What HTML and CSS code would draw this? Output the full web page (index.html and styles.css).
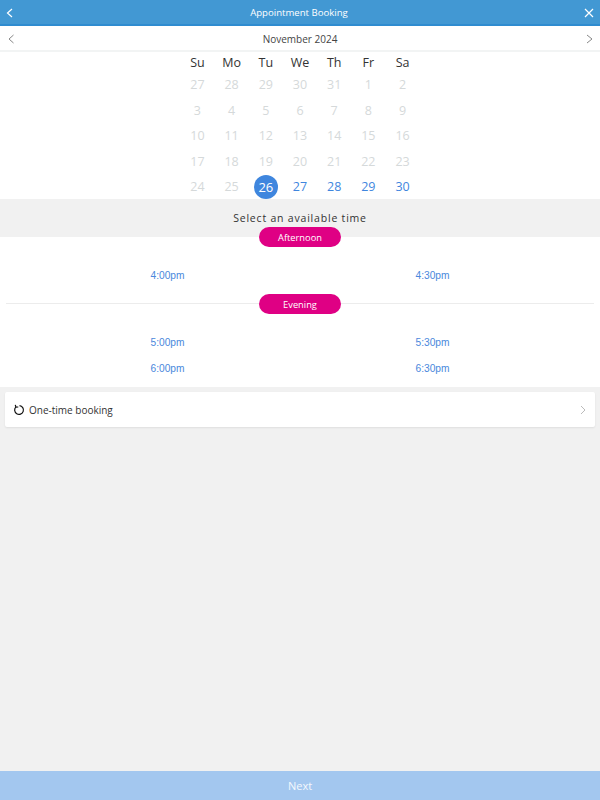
FILE: index.html
```html
<!DOCTYPE html>
<html lang="en">
<head>
  <meta charset="UTF-8">
  <title>Appointment Booking</title>
  <link rel="stylesheet" href="styles.css">
</head>
<body>
  <div class="page">
    <div class="header">
      <svg class="icon" width="12" height="12" viewBox="0 0 12 12"><path d="M9 2 L4.5 6 L9 10" /></svg>
      <span class="header-title">Appointment Booking</span>
      <svg class="icon" width="12" height="12" viewBox="0 0 12 12"><path d="M2 2 L10 10 M10 2 L2 10" /></svg>
    </div>

    <div class="month-bar">
      <svg class="month-arrow" width="12" height="12" viewBox="0 0 12 12"><path d="M8.5 2 L4 6 L8.5 10" /></svg>
      <span class="month-name">November 2024</span>
      <svg class="month-arrow" width="12" height="12" viewBox="0 0 12 12"><path d="M4 2 L9 6 L4 10" /></svg>
    </div>

    <div class="calendar">
      <div class="week week-head">
        <span>Su</span><span>Mo</span><span>Tu</span><span>We</span><span>Th</span><span>Fr</span><span>Sa</span>
      </div>
      <div class="week">
        <span class="off">27</span><span class="off">28</span><span class="off">29</span><span class="off">30</span><span class="off">31</span><span class="off">1</span><span class="off">2</span>
      </div>
      <div class="week">
        <span class="off">3</span><span class="off">4</span><span class="off">5</span><span class="off">6</span><span class="off">7</span><span class="off">8</span><span class="off">9</span>
      </div>
      <div class="week">
        <span class="off">10</span><span class="off">11</span><span class="off">12</span><span class="off">13</span><span class="off">14</span><span class="off">15</span><span class="off">16</span>
      </div>
      <div class="week">
        <span class="off">17</span><span class="off">18</span><span class="off">19</span><span class="off">20</span><span class="off">21</span><span class="off">22</span><span class="off">23</span>
      </div>
      <div class="week">
        <span class="off">24</span><span class="off">25</span><span class="today"><b>26</b></span><span class="open">27</span><span class="open">28</span><span class="open">29</span><span class="open">30</span>
      </div>
    </div>

    <div class="time-heading">Select an available time</div>

    <div class="times">
      <div class="period period-first"><span class="pill">Afternoon</span></div>
      <div class="time-row"><a href="#">4:00pm</a><a href="#">4:30pm</a></div>
      <div class="period period-line"><span class="pill">Evening</span></div>
      <div class="time-row time-row-evening"><a href="#">5:00pm</a><a href="#">5:30pm</a></div>
      <div class="time-row"><a href="#">6:00pm</a><a href="#">6:30pm</a></div>
    </div>

    <div class="booking-card">
      <svg class="repeat-icon" width="12" height="12" viewBox="0 0 12 12"><path d="M6.5 1.6 A4.4 4.4 0 1 1 2.9 2.9" /><path d="M2.3 0.8 L2.9 3.2 L5.3 3" /></svg>
      <span class="booking-label">One-time booking</span>
      <svg class="card-arrow" width="10" height="10" viewBox="0 0 10 10"><path d="M3 1 L7 5 L3 9" /></svg>
    </div>

    <div class="next-bar">Next</div>
  </div>
</body>
</html>
```

FILE: styles.css
```css
body {
  margin: 0;
  background: #f1f1f1;
  font-family: "Open Sans", Arial, sans-serif;
}
svg path {
  fill: none;
}
.page {
  height: 800px;
  display: flex;
  flex-direction: column;
}
.header {
  height: 23px;
  padding: 1px 5px 0 3px;
  display: flex;
  align-items: center;
  justify-content: space-between;
  background: #4298d3;
  border-bottom: 2px solid #2f8cd0;
}
.header-title {
  color: #fff;
  font-size: 9.6px;
}
.icon path {
  stroke: #fff;
  stroke-width: 1.2;
}
.month-bar {
  height: 22px;
  padding: 2px 5px 0;
  display: flex;
  align-items: center;
  justify-content: space-between;
  background: #fff;
  border-bottom: 2px solid #f2f4f4;
}
.month-name {
  color: #444;
  font-size: 10px;
}
.month-arrow path {
  stroke: #888;
  stroke-width: 1;
}
.calendar {
  background: #fff;
  height: 146px;
  padding-top: 1px;
}
.week {
  height: 25.5px;
  display: flex;
  justify-content: center;
  align-items: center;
  font-size: 12.5px;
}
.week span {
  width: 34.2px;
  text-align: center;
}
.week-head {
  height: 19px;
  color: #333;
}
.off {
  color: #d5d9da;
}
.open {
  color: #3f86de;
}
.today b {
  display: block;
  width: 24px;
  height: 24px;
  margin: 0 auto;
  border-radius: 50%;
  background: #3f86de;
  color: #fff;
  font-weight: 400;
  font-size: 13px;
  line-height: 24px;
}
.time-heading {
  height: 38px;
  line-height: 38px;
  text-align: center;
  color: #333;
  font-size: 10.5px;
  letter-spacing: 0.8px;
}
.times {
  background: #fff;
  height: 150px;
  padding: 0 6px;
}
.pill {
  display: block;
  width: 82px;
  height: 20px;
  line-height: 21px;
  text-align: center;
  border-radius: 10px;
  background: #df0084;
  color: #fff;
  font-size: 9.3px;
  font-weight: 500;
  position: relative;
}
.period {
  display: flex;
  justify-content: center;
}
.period-first {
  margin-top: -10px;
}
.period-line {
  margin-top: 6px;
  position: relative;
}
.period-line::before {
  content: "";
  position: absolute;
  left: 0;
  right: 0;
  top: 9px;
  border-top: 1px solid #ececec;
}
.time-row {
  height: 26px;
  padding: 0 29px;
  display: grid;
  grid-template-columns: 1fr 1fr;
  align-items: center;
  text-align: center;
  font-family: "Liberation Sans", Arial, sans-serif;
  font-size: 10.2px;
}
.period-first + .time-row {
  margin-top: 15px;
}
.time-row-evening {
  margin-top: 15px;
}
.time-row a {
  color: #4a88dc;
  text-decoration: none;
}
.booking-card {
  height: 35px;
  margin: 5px 5px 0;
  padding: 0 7px 0 8px;
  display: flex;
  align-items: center;
  background: #fff;
  border-radius: 2px;
  box-shadow: 0 1px 2px rgba(0, 0, 0, 0.08);
}
.repeat-icon path {
  stroke: #111;
  stroke-width: 1.2;
}
.booking-label {
  margin-left: 4px;
  flex: 1;
  color: #333;
  font-size: 10px;
}
.card-arrow path {
  stroke: #bbb;
  stroke-width: 1;
}
.next-bar {
  margin-top: auto;
  height: 29px;
  line-height: 29px;
  text-align: center;
  background: #a3c7ef;
  color: #f4f8fd;
  font-size: 11px;
}
```
